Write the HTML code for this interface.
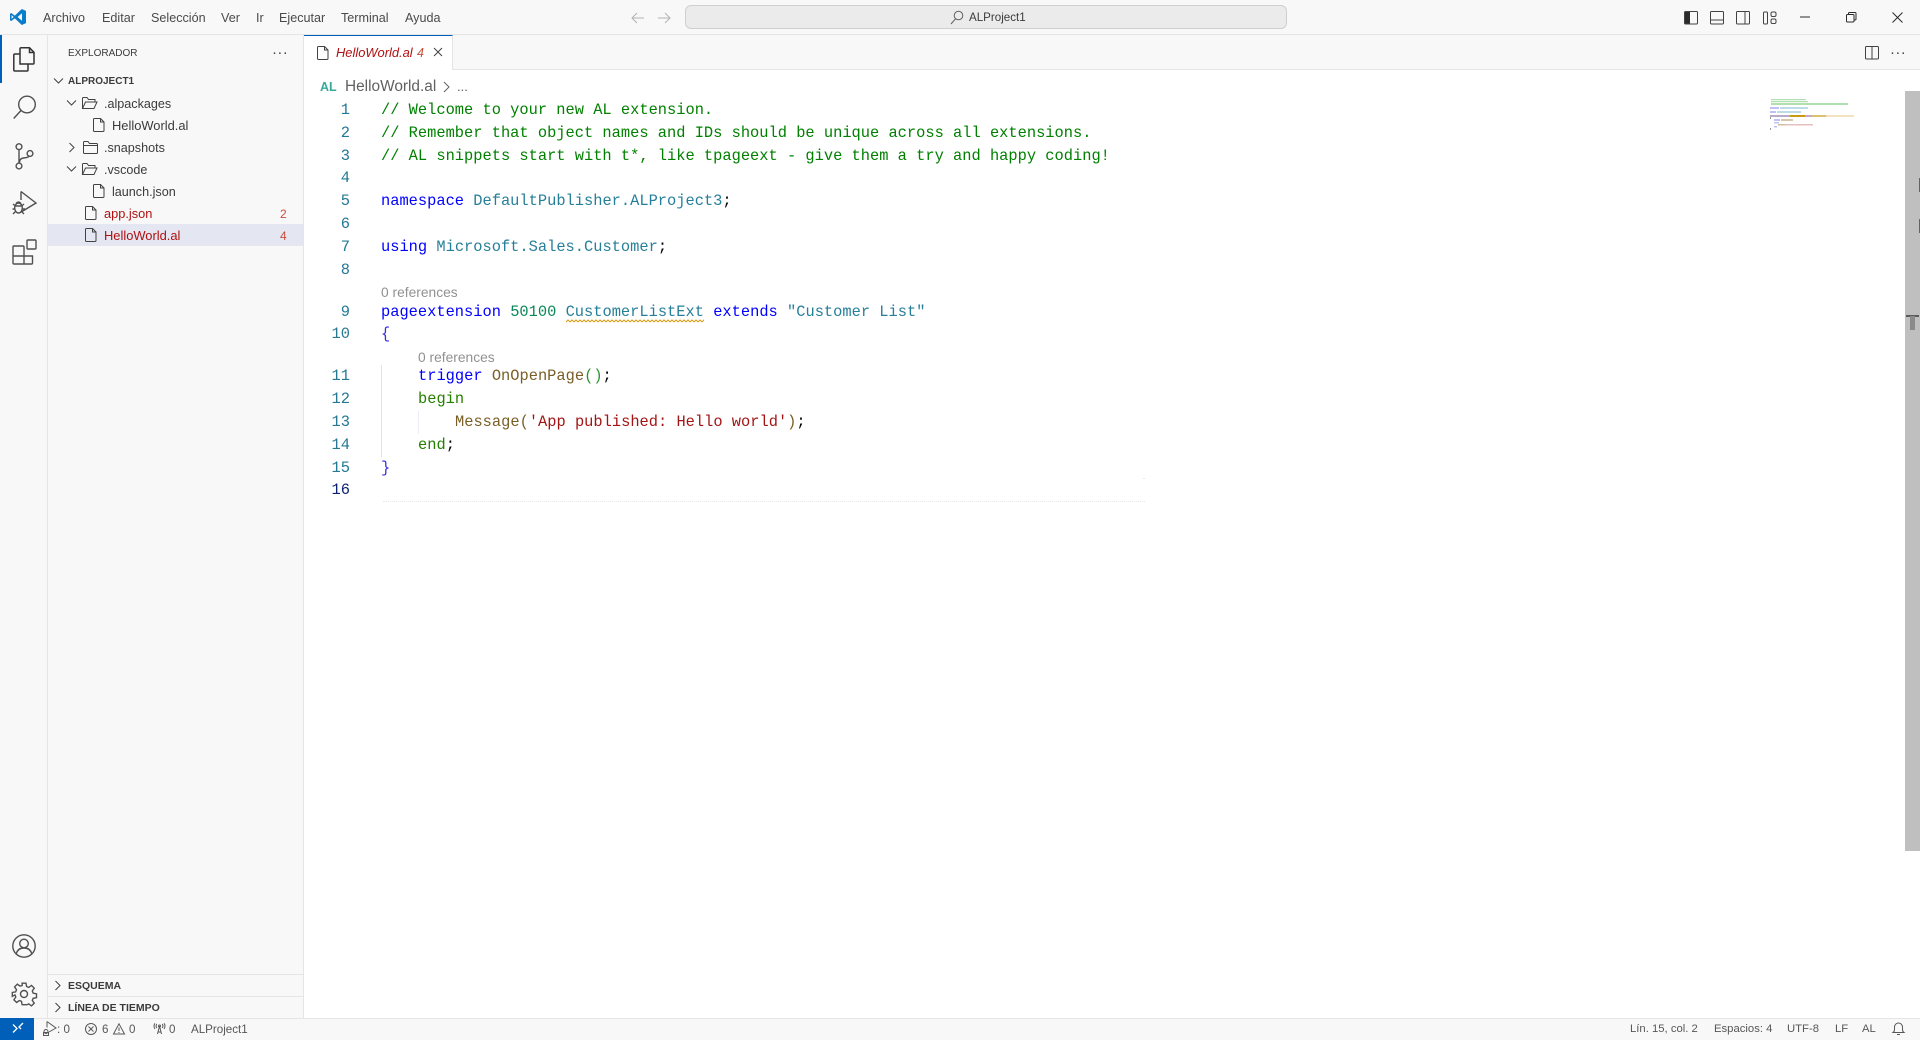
<!DOCTYPE html>
<html lang="es"><head><meta charset="utf-8"><title>HelloWorld.al - ALProject1</title>
<style>
html,body{margin:0;padding:0;width:1920px;height:1040px;overflow:hidden;background:#fff;font-family:"Liberation Sans",sans-serif;color:#3b3b3b}
.a{position:absolute}
.t{position:absolute;white-space:nowrap;height:22px;line-height:22px;font-size:12.6px}
.b{font-weight:700;font-size:10.5px;color:#3b3b3b}
.c{position:absolute;left:381px;white-space:pre;height:22px;line-height:22px;font-family:"Liberation Mono",monospace;font-size:15.38px;color:#000}
.n{position:absolute;left:310px;width:40px;text-align:right;height:22px;line-height:22px;font-family:"Liberation Mono",monospace;font-size:15.38px;color:#237893}
.g{color:#008000}.k{color:#0000ff}.y{color:#267f99}.u{color:#098658}.s{color:#a31515}.f{color:#795e26}.br{color:#3a2fe0}.p{color:#319331}.bn{color:#267f00}
.r{position:absolute;white-space:nowrap;font-size:13.8px;color:#919191;height:18px;line-height:18px}
.st{position:absolute;white-space:nowrap;font-size:11.6px;color:#575757;top:1018px;height:22px;line-height:23px}
svg{position:absolute;overflow:visible;fill:none;stroke:#424242}
.m{font-size:12.6px;color:#4a4a4a;top:7px}
</style></head><body>

<!-- title bar -->
<div class="a" style="left:0;top:0;width:1920px;height:34px;background:#f8f8f8;border-bottom:1px solid #e5e5e5"></div>
<svg style="left:9px;top:8px" width="18" height="18" viewBox="0 0 18 18"><path d="M12.8 1 5.8 7.6 2.3 5 1 5.7v6.6l1.3.7 3.5-2.6 7 6.6 4.2-1.9V2.9z" fill="#0a7cc9" stroke="none"/><path d="M13 5.2 8.6 9l4.4 3.8zM2.6 7l2 2-2 2z" fill="#f8f8f8" stroke="none"/></svg>
<span class="t m" style="left:43px">Archivo</span>
<span class="t m" style="left:102px">Editar</span>
<span class="t m" style="left:151px">Selección</span>
<span class="t m" style="left:221px">Ver</span>
<span class="t m" style="left:256px">Ir</span>
<span class="t m" style="left:279px">Ejecutar</span>
<span class="t m" style="left:341px">Terminal</span>
<span class="t m" style="left:405px">Ayuda</span>
<svg style="left:630px;top:11px;stroke:#b4b4b4" width="44" height="14" viewBox="0 0 44 14" stroke-width="1"><path d="M14 7H2.500M7 2 2 7l5 5M28 7h12M35 2l5 5-5 5"/></svg>
<div class="a" style="left:685px;top:5px;width:600px;height:22px;background:#ebebeb;border:1px solid #cfcfcf;border-radius:6px"></div>
<svg style="left:950px;top:10px;stroke:#616161" width="14" height="15" viewBox="0 0 14 15" stroke-width="1"><circle cx="8.500" cy="5.500" r="4.300"/><path d="M5.500 8.800 1 14"/></svg>
<span class="t" style="left:969px;top:7px;font-size:11.6px;color:#3b3b3b">ALProject1</span>
<!-- layout icons -->
<svg style="left:1684px;top:11px" width="14" height="14" viewBox="0 0 14 14"><rect x=".5" y=".5" width="13" height="12.500" rx="1"/><rect x="1" y="1" width="5" height="11.500" fill="#2b2b2b" stroke="none"/></svg>
<svg style="left:1710px;top:11px" width="14" height="14" viewBox="0 0 14 14"><rect x=".5" y=".5" width="13" height="12.500" rx="1"/><path d="M.5 9h13"/></svg>
<svg style="left:1736px;top:11px" width="14" height="14" viewBox="0 0 14 14"><rect x=".5" y=".5" width="13" height="12.500" rx="1"/><path d="M9 .5V13"/></svg>
<svg style="left:1763px;top:11px" width="14" height="14" viewBox="0 0 14 14"><rect x=".5" y="1" width="4" height="12" rx="1"/><rect x="8" y="1" width="5" height="4.500" rx="1.500"/><rect x="8" y="8" width="5" height="4.500" rx="1.500"/></svg>
<svg style="left:1800px;top:16px;stroke:#2b2b2b" width="11" height="2"><path d="M0 1h10"/></svg>
<svg style="left:1846px;top:12px;stroke:#2b2b2b" width="11" height="11" viewBox="0 0 11 11"><rect x=".5" y="2.500" width="7.500" height="7.500" rx="1"/><path d="M2.500 2.500V1.500q0-1 1-1H9q1 0 1 1v5.500q0 1-1 1H8"/></svg>
<svg style="left:1892px;top:12px;stroke:#2b2b2b" width="11" height="11" viewBox="0 0 11 11"><path d="m.5.5 10 10M10.500.5l-10 10"/></svg>

<!-- activity bar -->
<div class="a" style="left:0;top:35px;width:47px;height:983px;background:#f8f8f8;border-right:1px solid #e5e5e5"></div>
<div class="a" style="left:0;top:35px;width:2px;height:48px;background:#005fb8"></div>
<svg style="left:13px;top:47px;stroke:#333" width="22" height="25" viewBox="0 0 22 25" stroke-width="1.500"><path d="M7 17V1.700Q7 .8 8 .8h8.500L21 5.300V16q0 1-1 1z"/><path d="M16.500 1v4.500H21"/><path d="M7 7H2Q.8 7 .8 8v15q0 1 1.200 1h12q1 0 1-1v-6"/></svg>
<svg style="left:13px;top:95px;stroke:#505050" width="24" height="24" viewBox="0 0 24 24" stroke-width="1.400"><circle cx="14" cy="9.500" r="8.300"/><path d="M8 15.500.7 23.500"/></svg>
<svg style="left:15px;top:143px;stroke:#505050" width="19" height="27" viewBox="0 0 19 27" stroke-width="1.400"><circle cx="4" cy="3.700" r="2.900"/><circle cx="4" cy="23" r="2.900"/><circle cx="15" cy="10.500" r="2.900"/><path d="M4 6.700V20M4.500 19.500q0-4 4-4.500 5-.5 6-2"/></svg>
<svg style="left:12px;top:190px;stroke:#505050" width="25" height="27" viewBox="0 0 25 27" stroke-width="1.400"><path d="M9 1.500 24 13 10 21.500M9 1.500V10"/><ellipse cx="6.500" cy="18" rx="3.800" ry="5"/><path d="M3 16h7M1 14l2.500 2M12 14l-2.500 2M.5 19h2.500M13 19h-3M1 24l2.500-2.500M12 24l-2.500-2.500M4 13.500q2.500-3 5 0"/></svg>
<svg style="left:12px;top:239px;stroke:#505050" width="25" height="26" viewBox="0 0 25 26" stroke-width="1.400"><rect x="15" y="1" width="9" height="9" rx="1"/><path d="M2 7h9q1 0 1 1v9h8.500v7q0 1-1 1H2q-1 0-1-1V8q0-1 1-1zM1 17h11v8"/></svg>
<svg style="left:12px;top:934px;stroke:#505050" width="24" height="24" viewBox="0 0 24 24" stroke-width="1.400"><circle cx="12" cy="12" r="11.200"/><circle cx="12" cy="9.500" r="4.300"/><path d="M4.300 20q1.200-6 7.700-6t7.700 6"/></svg>
<svg style="left:12px;top:982px;stroke:#505050" width="24" height="24" viewBox="0 0 24 24" stroke-width="1.400"><path d="M10 1h4l.6 3.400 2.200.9L19.600 3.300l2.800 2.800-2 2.900.9 2.200 3.400.6v4l-3.400.6-.9 2.200 2 2.800-2.800 2.800-2.800-2-2.200.9L14 23h-4l-.6-3.400-2.200-.9-2.800 2-2.800-2.800 2-2.800-.9-2.200L0 14.500v-4l3.400-.6.9-2.200-2-2.900L5.100 2 7.900 4l2.200-.6z" transform="translate(.3 .2) scale(.98)"/><circle cx="12" cy="12" r="3.500"/></svg>

<!-- sidebar -->
<div class="a" style="left:48px;top:35px;width:255px;height:983px;background:#f8f8f8;border-right:1px solid #e5e5e5"></div>
<span class="t" style="left:68px;top:43px;font-size:10px;color:#3b3b3b">EXPLORADOR</span>
<span class="t" style="left:272px;top:42px;font-size:15px;color:#424242;letter-spacing:.4px">···</span>
<svg style="left:53px;top:76px" width="11" height="10" viewBox="0 0 11 10"><path d="m1 2.500 4.500 4.500L10 2.500"/></svg>
<span class="t b" style="left:68px;top:71px;font-size:10px">ALPROJECT1</span>
<div class="a" style="left:48px;top:224px;width:255px;height:22px;background:#e4e6f1"></div>

<svg style="left:66px;top:98px" width="11" height="10" viewBox="0 0 11 10"><path d="m1 2.500 4.500 4.500L10 2.500"/></svg>
<svg style="left:82px;top:97px" width="16" height="13" viewBox="0 0 16 13"><path d="M.5 11.500V1.500q0-1 1-1h3.500l1.500 2H13v2.500M.5 11.500h11.500L15 5H3.500z"/></svg>
<span class="t" style="left:104px;top:93px">.alpackages</span>
<svg style="left:93px;top:118px" width="12" height="14" viewBox="0 0 12 14"><path d="M1.500.5H7.500L11 4v8.500q0 1-1 1H1.500q-1 0-1-1V1.500q0-1 1-1zM7.500.5V4H11"/></svg>
<span class="t" style="left:112px;top:115px;font-size:12.9px">HelloWorld.al</span>

<svg style="left:67px;top:142px" width="10" height="11" viewBox="0 0 10 11"><path d="m2.500 1 4.500 4.500L2.500 10"/></svg>
<svg style="left:83px;top:141px" width="15" height="13" viewBox="0 0 15 13"><path d="M.5 11.500V1.500q0-1 1-1h3.500l1.500 2h7q1 0 1 1v8q0 1-1 1h-12q-1 0-1-1zM.5 4.500h14"/></svg>
<span class="t" style="left:104px;top:137px">.snapshots</span>

<svg style="left:66px;top:164px" width="11" height="10" viewBox="0 0 11 10"><path d="m1 2.500 4.500 4.500L10 2.500"/></svg>
<svg style="left:82px;top:163px" width="16" height="13" viewBox="0 0 16 13"><path d="M.5 11.500V1.500q0-1 1-1h3.500l1.500 2H13v2.500M.5 11.500h11.500L15 5H3.500z"/></svg>
<span class="t" style="left:104px;top:159px">.vscode</span>
<svg style="left:93px;top:184px" width="12" height="14" viewBox="0 0 12 14"><path d="M1.500.5H7.500L11 4v8.500q0 1-1 1H1.500q-1 0-1-1V1.500q0-1 1-1zM7.500.5V4H11"/></svg>
<span class="t" style="left:112px;top:181px">launch.json</span>

<svg style="left:85px;top:206px" width="12" height="14" viewBox="0 0 12 14"><path d="M1.500.5H7.500L11 4v8.500q0 1-1 1H1.500q-1 0-1-1V1.500q0-1 1-1zM7.500.5V4H11"/></svg>
<span class="t" style="left:104px;top:203px;color:#b01011;font-size:12.8px">app.json</span>
<span class="t" style="left:280px;top:203px;font-size:12px;color:#c74e39">2</span>
<svg style="left:85px;top:228px" width="12" height="14" viewBox="0 0 12 14"><path d="M1.500.5H7.500L11 4v8.500q0 1-1 1H1.500q-1 0-1-1V1.500q0-1 1-1zM7.500.5V4H11"/></svg>
<span class="t" style="left:104px;top:225px;color:#b01011;font-size:12.9px">HelloWorld.al</span>
<span class="t" style="left:280px;top:225px;font-size:12px;color:#c74e39">4</span>

<div class="a" style="left:48px;top:974px;width:255px;height:1px;background:#e5e5e5"></div>
<svg style="left:53px;top:980px" width="10" height="11" viewBox="0 0 10 11"><path d="m2.500 1 4.500 4.500L2.500 10"/></svg>
<span class="t b" style="left:68px;top:975px">ESQUEMA</span>
<div class="a" style="left:48px;top:996px;width:255px;height:1px;background:#e5e5e5"></div>
<svg style="left:53px;top:1002px" width="10" height="11" viewBox="0 0 10 11"><path d="m2.500 1 4.500 4.500L2.500 10"/></svg>
<span class="t b" style="left:68px;top:997px">LÍNEA DE TIEMPO</span>

<!-- tabs -->
<div class="a" style="left:304px;top:35px;width:1616px;height:34px;background:#f8f8f8;border-bottom:1px solid #e5e5e5"></div>
<div class="a" style="left:304px;top:35px;width:149px;background:#fff;border-top:1px solid #005fb8;border-right:1px solid #e5e5e5;box-sizing:border-box;height:35px"></div>
<svg style="left:317px;top:46px" width="12" height="14" viewBox="0 0 12 14"><path d="M1.500.5H7.500L11 4v8.500q0 1-1 1H1.500q-1 0-1-1V1.500q0-1 1-1zM7.500.5V4H11"/></svg>
<span class="t" style="left:336px;top:42px;font-style:italic;color:#b01011;font-size:12.9px">HelloWorld.al</span>
<span class="t" style="left:417px;top:42px;font-style:italic;color:#c74e39;font-size:12.5px">4</span>
<svg style="left:433px;top:47px" width="10" height="10" viewBox="0 0 10 10"><path d="m1 1 8 8M9 1 1 9"/></svg>
<svg style="left:1865px;top:46px" width="14" height="14" viewBox="0 0 14 14"><rect x=".5" y=".5" width="13" height="12.500" rx="1"/><path d="M7 .5V13"/></svg>
<span class="t" style="left:1890px;top:42px;font-size:15px;color:#424242;letter-spacing:.4px">···</span>

<!-- breadcrumb -->
<span class="t" style="left:320px;top:76px;font-weight:700;font-size:12.5px;color:#37a99a">AL</span>
<span class="t" style="left:345px;top:76px;font-size:15.4px;color:#616161">HelloWorld.al</span>
<svg style="left:443px;top:81px;stroke:#616161" width="8" height="12" viewBox="0 0 8 12"><path d="m1 1 5 5-5 5"/></svg>
<span class="t" style="left:457px;top:76px;font-size:13px;color:#616161">...</span>

<!-- code -->
<div class="n" style="top:99px">1</div>
<div class="n" style="top:122px">2</div>
<div class="n" style="top:145px">3</div>
<div class="n" style="top:167px">4</div>
<div class="n" style="top:190px">5</div>
<div class="n" style="top:213px">6</div>
<div class="n" style="top:236px">7</div>
<div class="n" style="top:259px">8</div>
<div class="n" style="top:301px">9</div>
<div class="n" style="top:323px">10</div>
<div class="n" style="top:365px">11</div>
<div class="n" style="top:388px">12</div>
<div class="n" style="top:411px">13</div>
<div class="n" style="top:434px">14</div>
<div class="n" style="top:457px">15</div>
<div class="n" style="top:479px;color:#0b216f">16</div>

<div class="c g" style="top:99px">// Welcome to your new AL extension.</div>
<div class="c g" style="top:122px">// Remember that object names and IDs should be unique across all extensions.</div>
<div class="c g" style="top:145px">// AL snippets start with t*, like tpageext - give them a try and happy coding!</div>
<div class="c" style="top:190px"><span class="k">namespace</span> <span class="y">DefaultPublisher.ALProject3</span>;</div>
<div class="c" style="top:236px"><span class="k">using</span> <span class="y">Microsoft.Sales.Customer</span>;</div>
<div class="r" style="left:381px;top:284px">0 references</div>
<div class="c" style="top:301px"><span class="k">pageextension</span> <span class="u">50100</span> <span class="y">CustomerListExt</span> <span class="k">extends</span> <span class="y">"Customer List"</span></div>
<svg style="left:566px;top:319px;stroke:none" width="138" height="5"><defs><pattern id="sq" width="4" height="4" patternUnits="userSpaceOnUse"><path d="M0 3l2-2 2 2" fill="none" stroke="#d89a12" stroke-width="1"/></pattern></defs><rect width="138" height="4" fill="url(#sq)"/></svg>
<div class="c br" style="top:323px">{</div>
<div class="r" style="left:418px;top:349px">0 references</div>
<div class="a" style="left:381px;top:365px;width:1px;height:92px;background:#e2e2ef"></div>
<div class="a" style="left:418px;top:411px;width:1px;height:23px;background:#ececf4"></div>
<div class="c" style="top:365px;left:418px"><span class="k">trigger</span> <span class="f">OnOpenPage</span><span class="p">()</span>;</div>
<div class="c bn" style="top:388px;left:418px">begin</div>
<div class="c" style="top:411px;left:455px"><span class="f">Message</span><span class="f">(</span><span class="s">'App published: Hello world'</span><span class="f">)</span>;</div>
<div class="c" style="top:434px;left:418px"><span class="bn">end</span>;</div>
<div class="c br" style="top:457px">}</div>
<div class="a" style="left:383px;top:501px;width:762px;height:0;border-top:1px dotted #e8e8e8"></div>
<div class="a" style="left:1143px;top:478px;width:2px;height:1px;background:#e8e8e8"></div>

<!-- minimap -->
<svg style="left:1770px;top:98px;stroke:none" width="85" height="32" viewBox="0 0 85 32">
<g fill="#b0dfb0"><rect x="1" y="1" width="35" height="1.200"/><rect x="1" y="3" width="37" height="1.200"/><rect x="1" y="5" width="77" height="2"/></g>
<g fill="#c0c0f4"><rect x="0" y="9" width="9" height="2"/><rect x="0" y="13" width="6" height="2"/></g>
<g fill="#bcdde8"><rect x="10" y="9" width="28" height="2"/><rect x="7" y="13" width="24" height="2"/></g>
<rect x="0" y="17" width="20" height="2" fill="#b8aac8"/><rect x="20" y="17" width="15" height="2" fill="#c89a10"/><rect x="35" y="17" width="7" height="2" fill="#c4aac4"/><rect x="42" y="17" width="14" height="2" fill="#dcc070"/><rect x="56" y="17" width="28" height="2" fill="#f2e2c0"/>
<rect x="0" y="19" width="1" height="2" fill="#999"/><rect x="4" y="21" width="6" height="2" fill="#c0c0f4"/><rect x="11" y="21" width="12" height="2" fill="#d4c8a8"/><rect x="4" y="24" width="5" height="1.500" fill="#c0c4f4"/><rect x="8" y="26" width="7" height="1.500" fill="#ccc0a0"/><rect x="15" y="26" width="28" height="1.500" fill="#e4c0c0"/><rect x="4" y="28" width="3" height="1.500" fill="#c0c0f4"/><rect x="0" y="30" width="1" height="2" fill="#999"/>
</svg>

<!-- scrollbar -->
<div class="a" style="left:1905px;top:91px;width:15px;height:760px;background:#bfbfbf"></div>
<div class="a" style="left:1919px;top:178px;width:1px;height:14px;background:#b04050"></div>
<div class="a" style="left:1919px;top:219px;width:1px;height:14px;background:#b04050"></div>
<div class="a" style="left:1906px;top:315px;width:13px;height:2px;background:#5a5a5a"></div>
<div class="a" style="left:1910px;top:316px;width:5px;height:14px;background:#8a8a8a"></div>

<!-- status bar -->
<div class="a" style="left:0;top:1018px;width:1920px;height:22px;background:#f8f8f8;border-top:1px solid #e5e5e5;box-sizing:border-box"></div>
<div class="a" style="left:0;top:1018px;width:34px;height:22px;background:#005fb8"></div>
<svg style="left:12px;top:1022px;stroke:#fff" width="12" height="12" viewBox="0 0 12 12" stroke-width="1.300"><path d="M1 2.500 5 6.500 1 10.500M11 1 7 5l2 2"/></svg>
<svg style="left:42px;top:1021px;stroke:#575757" width="17" height="16" viewBox="0 0 17 16"><path d="M5 .5 14 7l-7 4M5 .5v6"/><circle cx="4" cy="10.500" r="2"/><rect x="1.500" y="11.500" width="5" height="3"/></svg>
<span class="st" style="left:57px">: 0</span>
<svg style="left:85px;top:1023px;stroke:#575757" width="12" height="12" viewBox="0 0 12 12"><circle cx="6" cy="6" r="5.500"/><path d="m3.500 3.500 5 5M8.500 3.500l-5 5"/></svg>
<span class="st" style="left:102px">6</span>
<svg style="left:113px;top:1023px;stroke:#575757" width="12" height="12" viewBox="0 0 12 12"><path d="M6 .8 11.500 11H.5zM6 4.500v3.500M6 9v1"/></svg>
<span class="st" style="left:129px">0</span>
<svg style="left:153px;top:1023px;stroke:#575757" width="13" height="12" viewBox="0 0 13 12"><path d="M4.500 11 6.500 3l2 8M5 9h3"/><circle cx="6.500" cy="3" r="1"/><path d="M3.800 1q-1.500 2 0 4M9.200 1q1.500 2 0 4M2 .3Q0 3 2 6M11 .3q2 2.700 0 5.700"/></svg>
<span class="st" style="left:169px">0</span>
<span class="st" style="left:191px">ALProject1</span>
<span class="st" style="left:1630px;font-size:11.3px">Lín. 15, col. 2</span>
<span class="st" style="left:1714px;font-size:11.3px">Espacios: 4</span>
<span class="st" style="left:1787px;font-size:11.3px">UTF-8</span>
<span class="st" style="left:1835px;font-size:11.3px">LF</span>
<span class="st" style="left:1862px;font-size:11.3px">AL</span>
<svg style="left:1892px;top:1022px;stroke:#575757" width="13" height="14" viewBox="0 0 13 14"><path d="M1 10.500q1.500-1 1.500-3V5a4 4 0 0 1 8 0v2.500q0 2 1.500 3zM5 12.500h3"/></svg>
</body></html>
